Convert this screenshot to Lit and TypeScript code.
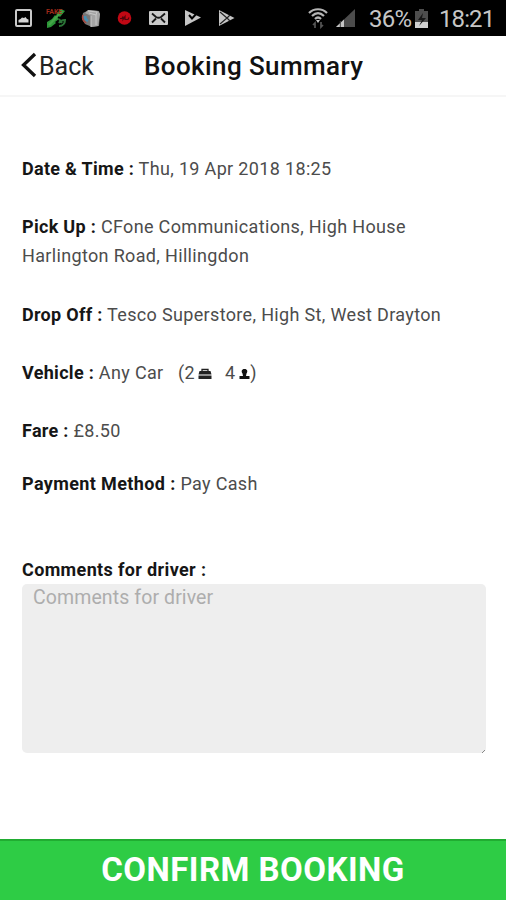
import { LitElement, html, css } from "lit";
import { customElement } from "lit/decorators.js";

@customElement("status-bar")
class StatusBar extends LitElement {
  static styles = css`
    :host { display: flex; align-items: center; height: 36px; box-sizing: border-box; background: #000; color: #c6c6c6; font: 400 24px/36px Roboto, sans-serif; }
    svg { display: block; flex: none; }
    .notes { display: flex; align-items: center; flex: none; width: 302px; padding-left: 14px; box-sizing: border-box; }
    .photo { margin-right: 13px; }
    .sat { margin-right: 13px; }
    .cube { margin-right: 16px; }
    .red { margin-right: 16px; }
    .mail { margin-right: 15px; }
    .check { margin-right: 15px; }
    .wifi { margin-left: 5px; margin-right: 7px; }
    .signal { margin-right: 13px; }
    .percent { flex: none; width: 45px; white-space: nowrap; letter-spacing: -0.7px; padding-top: 2px; }
    .clock { flex: none; margin-left: 10px; white-space: nowrap; letter-spacing: -0.9px; padding-top: 2px; }
    .tiny { font: 700 7px Roboto, sans-serif; }
  `;
  render() {
    return html`
      <div class="notes">
        <svg class="photo" width="19" height="20" viewBox="0 0 19 20"><rect x="2" y="2" width="15" height="16" rx="1" fill="none" stroke="#c9c9c9" stroke-width="2"/><path d="M4.500 14.500V12l2-1 1.500-1.500 2 .5 1.500-1 1.500 2 1.500.5v3z" fill="#d5d5d5"/></svg>
        <svg class="sat" width="22" height="22" viewBox="0 0 22 22"><path d="M15 2l4 2-5 6-4-3zM9 8l4 4-4 3-3-3zM1 15l5-3 4 4-5 4-4 1z" fill="#2c9638"/><path d="M3 18l13-14" stroke="#45a548" stroke-width="2.500"/><path d="M13 19c4 0 6-3 6-6-3 0-5 1-6 3M13 12l3 4" fill="none" stroke="#2b7437" stroke-width="2"/><text class="tiny" x="0" y="6.500" fill="#9f2a1a">FAKE</text></svg>
        <svg class="cube" width="20" height="20" viewBox="0 0 20 20"><path d="M2 5l6-3 10 1 1 3-1 12-7 1-7-3-3-5z" fill="#777"/><path d="M7 2l10 1 2 3-2 12-7 1V8L4 5z" fill="#a4a4a4"/><path d="M7 3l9 1-1 3-7-2M10 8v11M15 7v10" fill="none" stroke="#c7c7c7"/><path d="M2 7c-1 3 0 6 3 8" fill="none" stroke="#a7473f" stroke-width="1.500"/><path d="M4 8c0 2 1 4 3 5" fill="none" stroke="#458fb3" stroke-width="2.500"/></svg>
        <svg class="red" width="15" height="16" viewBox="0 0 15 16"><circle cx="7.500" cy="8" r="6.800" fill="#c00814"/><path d="M3 8.500h2l1-2v3l2-3v3h3l1-2" fill="none" stroke="#50040a" stroke-width="1.200"/></svg>
        <svg class="mail" width="21" height="16" viewBox="0 0 21 16"><rect x="1" y="1" width="19" height="14" rx="1" fill="#c9c9c9"/><path d="M4 3.500l4 3.500q2.500 1.500 5 0l4-3.500M4 12.500l4-4M17 12.500l-4-4" fill="none" stroke="#171717" stroke-width="1.800"/></svg>
        <svg class="check" width="18" height="18" viewBox="0 0 18 18"><path d="M1 1l16 7.500L1 17z" fill="#c5c5c5"/><path d="M5 6l3 3.500L14 3" fill="none" stroke="#000" stroke-width="2"/></svg>
        <svg width="19" height="18" viewBox="0 0 19 18"><path d="M2 1l15.500 8L2 17z" fill="#c5c5c5"/><path d="M3 3l7 6-7 6M10 9l3-3M10 9l3 3" fill="none" stroke="#222" stroke-width="1.200"/></svg>
      </div>
      <svg class="wifi" width="22" height="22" viewBox="0 0 22 22"><path d="M2 6c5-5 13-5 18 0M5 9c4-4 8-4 12 0M8 12c2-2 4-2 6 0" fill="none" stroke="#b4b4b4" stroke-width="2.200"/><path d="M9 13h4l-2 3z" fill="#c5c5c5"/><path d="M8 21v-5l-2 2M14 15v5l2-2" fill="none" stroke="#555" stroke-width="1.700"/></svg>
      <svg class="signal" width="20" height="20" viewBox="0 0 20 20"><path d="M0 19L19 1v18z" fill="#4c4c4c"/><path d="M0 19L8 11.500V19z" fill="#c5c5c5"/><path d="M4.300 13v6" stroke="#444"/></svg>
      <span class="percent">36%</span>
      <svg width="15" height="21" viewBox="0 0 15 21"><path d="M1 3h4V1h5v2h4v17H1z" fill="#4d4d4d"/><path d="M1 14h13v6H1z" fill="#d0d0d0"/><path d="M9 5l-5 7h4l-3 6 7-8H8z" fill="#171717"/></svg>
      <span class="clock">18:21</span>`;
  }
}

@customElement("app-root")
class AppRoot extends LitElement {
  static styles = css`
    :host { display: flex; flex-direction: column; height: 900px; background: #fff; font-family: Roboto, sans-serif; overflow: hidden; }
    header { display: flex; align-items: center; flex: none; height: 61px; box-sizing: border-box; border-bottom: 2px solid #f6f6f6; padding-left: 21px; color: #111; }
    .back { display: flex; align-items: center; width: 123px; font-size: 25px; line-height: 29px; color: #222; }
    .back svg { margin-right: 2px; }
    .back span { padding-top: 1px; }
    h1 { margin: 0; font-size: 26px; font-weight: 500; letter-spacing: 0.4px; white-space: nowrap; }
    main { flex: 1; padding: 57px 20px 0 22px; font-size: 18px; line-height: 29px; letter-spacing: 0.34px; color: #4c4c4c; }
    p { margin: 0 0 29px; white-space: nowrap; }
    b { font-weight: 700; letter-spacing: 0.3px; color: #161616; }
    .drop { margin-top: 30px; }
    .fare { margin-bottom: 24px; }
    .pay { margin-bottom: 57px; }
    .pay b { letter-spacing: 0.38px; }
    .bag { margin: 0 13px 0 3px; }
    .person { margin-left: 4px; }
    .bag, .person { vertical-align: -1px; }
    label { display: block; font-weight: 700; letter-spacing: 0.36px; color: #161616; white-space: nowrap; }
    textarea { display: block; box-sizing: border-box; width: 464px; height: 169px; margin: 0; padding: 1px 11px 0; border: 0; border-radius: 5px; background: #eee; resize: none; font: 400 19.5px/25px Roboto, sans-serif; letter-spacing: 0.1px; outline: 0; }
    textarea::placeholder { color: #adadad; opacity: 1; }
    .field { display: flex; align-items: flex-end; }
    .grip { flex: none; margin-left: -4px; }
    button { flex: none; height: 61px; padding: 0 0 2px; border: 0; border-top: 2px solid #21ac32; background: #2ecc45; color: #fff; font: 700 33px/57px Roboto, sans-serif; letter-spacing: 0.45px; }
  `;
  render() {
    return html`
      <status-bar></status-bar>
      <header>
        <div class="back"><svg width="16" height="28" viewBox="0 0 16 28"><path d="M14 2L2.500 13l11.500 11" fill="none" stroke="#111" stroke-width="3.300"/></svg><span>Back</span></div>
        <h1>Booking Summary</h1>
      </header>
      <main>
        <p><b>Date &amp; Time :</b> Thu, 19 Apr 2018 18:25</p>
        <p><b>Pick Up :</b> CFone Communications, High House<br>Harlington Road, Hillingdon</p>
        <p class="drop"><b>Drop Off :</b> Tesco Superstore, High St, West Drayton</p>
        <p><b>Vehicle :</b> Any Car &nbsp; (2<svg class="bag" width="14" height="12" viewBox="0 0 14 12"><path d="M4 3V1.500h6V3" fill="none" stroke="#222" stroke-width="1.300"/><path d="M1.500 3h11l1 3.500H.5zM.5 7.500h13V11H.5z" fill="#222"/></svg>4<svg class="person" width="11" height="12" viewBox="0 0 11 12"><path d="M5.500 1C8.500 1 9 3.500 7.500 5.500L7 8h3.500v3H.5V8H4l-.5-2.500C2 3.500 2.500 1 5.500 1z" fill="#111"/></svg>)</p>
        <p class="fare"><b>Fare :</b> £8.50</p>
        <p class="pay"><b>Payment Method :</b> Pay Cash</p>
        <label for="comments">Comments for driver :</label>
        <div class="field">
          <textarea id="comments" placeholder="Comments for driver"></textarea>
          <svg class="grip" width="3" height="4" viewBox="0 0 3 4"><path d="M0 4l3-3" stroke="#888"/></svg>
        </div>
      </main>
      <button>CONFIRM BOOKING</button>`;
  }
}
